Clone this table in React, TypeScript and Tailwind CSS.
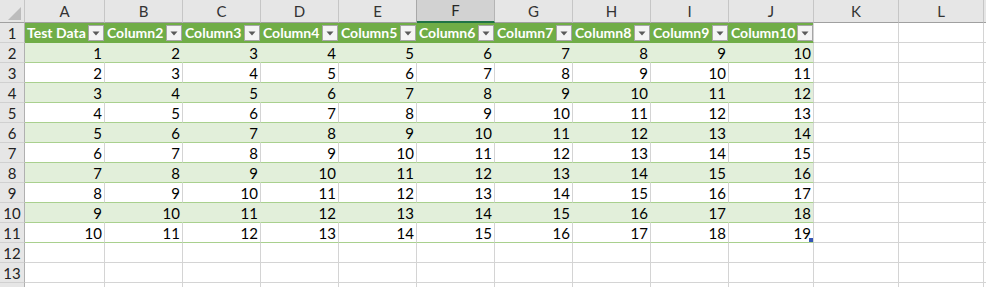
import React from "react";

const cols = ["A", "B", "C", "D", "E", "F", "G", "H", "I", "J", "K", "L"];
const widthCls: Record<string, string> = {
  A: "w-[80px]",
  B: "w-[78px]",
  C: "w-[78px]",
  D: "w-[78px]",
  E: "w-[78px]",
  F: "w-[78px]",
  G: "w-[78px]",
  H: "w-[78px]",
  I: "w-[78px]",
  J: "w-[85px]",
  K: "w-[85px]",
  L: "w-[85px]",
};
const headers = [
  "Test Data",
  "Column2",
  "Column3",
  "Column4",
  "Column5",
  "Column6",
  "Column7",
  "Column8",
  "Column9",
  "Column10",
];

function DropBtn() {
  return (
    <div className="w-[16px] h-[16px] mb-[1px] shrink-0 bg-[#f4f4f4] border border-[#a6a6a6] flex items-center justify-center">
      <svg width="8" height="5" viewBox="0 0 8 5">
        <path d="M0.5 0.5 L7.5 0.5 L4 4.5 Z" fill="#5a5a5a" />
      </svg>
    </div>
  );
}

function RowHeader({ n }: { n?: number }) {
  return (
    <div className="w-[25px] shrink-0 h-full bg-[#e6e6e6] border-r border-b border-r-[#b0b0b0] border-b-[#d0d0d0] flex items-end justify-center text-[#222] leading-[18px]">
      {n}
    </div>
  );
}

export default function App() {
  const dataRows = Array.from({ length: 10 }, (_, i) => i + 1);
  return (
    <div
      className="w-[986px] h-[287px] overflow-hidden bg-white text-[15px] text-black"
      style={{ fontFamily: "Lato, 'Liberation Sans', sans-serif" }}
    >
      {/* column header row */}
      <div className="flex h-[23px]">
        <div className="w-[25px] shrink-0 h-full bg-[#e6e6e6] border-r border-b border-r-[#c6c6c6] border-b-[#a0a0a0] flex items-end justify-end p-[2px] pr-[3px]">
          <svg width="13" height="13" viewBox="0 0 13 13">
            <path d="M13 0 L13 13 L0 13 Z" fill="#bcbcbc" />
          </svg>
        </div>
        {cols.map((c) => {
          const sel = c === "F";
          const beforeSel = c === "E";
          return (
            <div
              key={c}
              className={`${widthCls[c]} shrink-0 h-full flex items-center justify-center border-r ${
                sel
                  ? "bg-[#d2d2d2] border-b-2 border-b-[#217346] border-r-[#b4b4b4] text-[#262626]"
                  : beforeSel
                  ? "bg-[#e6e6e6] border-b border-b-[#a0a0a0] border-r-[#a8a8a8] text-[#333]"
                  : "bg-[#e6e6e6] border-b border-b-[#a0a0a0] border-r-[#c6c6c6] text-[#333]"
              }`}
            >
              {c}
            </div>
          );
        })}
        <div className="flex-1 h-full bg-[#e6e6e6] border-b border-b-[#a0a0a0]" />
      </div>

      {/* row 1: table header */}
      <div className="flex h-[20px]">
        <RowHeader n={1} />
        {headers.map((h, i) => (
          <div
            key={h}
            className={`${widthCls[cols[i]]} shrink-0 h-full bg-[#70ad47] border-b border-b-[#70ad47] border-r ${
              i === 9 ? "border-r-[#d4d4d4]" : "border-r-[#70ad47]"
            } flex items-end justify-between pl-[2px] text-white font-bold text-[14px] leading-[19px]`}
          >
            <span className="whitespace-nowrap">{h}</span>
            <DropBtn />
          </div>
        ))}
        <div className="w-[85px] shrink-0 h-full border-r border-b border-[#d4d4d4]" />
        <div className="w-[85px] shrink-0 h-full border-r border-b border-[#d4d4d4]" />
        <div className="flex-1 h-full border-b border-[#d4d4d4]" />
      </div>

      {/* data rows */}
      {dataRows.map((i) => {
        const shaded = i % 2 === 1;
        return (
          <div key={i} className="flex h-[20px]">
            <RowHeader n={i + 1} />
            {headers.map((h, c) => (
              <div
                key={h}
                className={`${widthCls[cols[c]]} shrink-0 h-full border-b border-b-[#a9d08e] border-r relative ${
                  shaded ? "bg-[#e2efda]" : "bg-white"
                } ${
                  c === 9
                    ? "border-r-[#d4d4d4]"
                    : shaded
                    ? "border-r-[#e2efda]"
                    : "border-r-[#d4d4d4]"
                } flex items-end justify-end pr-[2px] leading-[18px]`}
              >
                {i + c}
                {i === 10 && c === 9 && (
                  <div className="absolute right-[0px] bottom-[0px] w-[4px] h-[4px] bg-[#3455b4]" />
                )}
              </div>
            ))}
            <div className="w-[85px] shrink-0 h-full border-r border-b border-[#d4d4d4]" />
            <div className="w-[85px] shrink-0 h-full border-r border-b border-[#d4d4d4]" />
            <div className="flex-1 h-full border-b border-[#d4d4d4]" />
          </div>
        );
      })}

      {/* empty rows */}
      {[12, 13, 14].map((n) => (
        <div key={n} className="flex h-[20px]">
          <RowHeader n={n < 14 ? n : undefined} />
          {cols.map((c) => (
            <div
              key={c}
              className={`${widthCls[c]} shrink-0 h-full border-r border-b border-[#d4d4d4]`}
            />
          ))}
          <div className="flex-1 h-full border-b border-[#d4d4d4]" />
        </div>
      ))}
    </div>
  );
}
